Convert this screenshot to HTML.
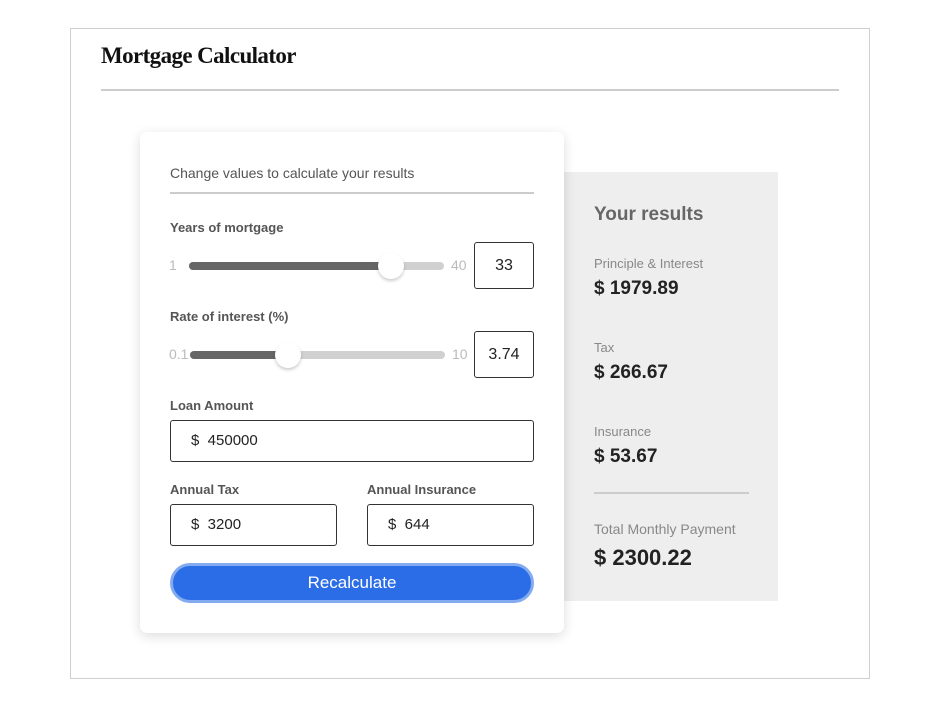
<!DOCTYPE html>
<html><head><meta charset="utf-8"><style>
*{margin:0;padding:0;box-sizing:border-box}
body{width:947px;height:715px;background:#fff;position:relative;overflow:hidden;font-family:"Liberation Sans",sans-serif}
.a{position:absolute;white-space:nowrap}
.outer{position:absolute;left:70px;top:28px;width:800px;height:651px;border:1px solid #cfcfcf}
.title{left:101px;top:43px;font-family:"Liberation Serif",serif;font-weight:bold;font-size:23px;letter-spacing:-0.6px;color:#111}
.rule{position:absolute;height:2px;background:#ccc}
.panel{position:absolute;left:564px;top:172px;width:214px;height:429px;background:#eee}
.card{position:absolute;left:140px;top:132px;width:424px;height:501px;background:#fff;border-radius:7px;box-shadow:0 3px 12px rgba(0,0,0,.14)}
.lbl{font-size:13px;font-weight:bold;color:#555}
.track{position:absolute;height:8px;border-radius:4px;background:#d0d0d0}
.fill{position:absolute;height:8px;border-radius:4px;background:#666}
.thumb{position:absolute;width:26px;height:26px;border-radius:50%;background:#fff;box-shadow:0 2px 3px rgba(0,0,0,.2)}
.num{font-size:14px;color:#bbb}
.box{position:absolute;border:1px solid #333;border-radius:3px;background:#fff;font-size:15px;color:#222}
.sm{font-size:13px;color:#888}
.big{font-size:19px;font-weight:bold;color:#222}
</style></head><body>
<div class="outer"></div>
<div class="a title">Mortgage Calculator</div>
<div class="rule" style="left:101px;top:89px;width:738px"></div>
<div class="panel"></div>
<div class="card"></div>
<div class="a" style="left:170px;top:165px;font-size:14px;color:#555">Change values to calculate your results</div>
<div class="rule" style="left:170px;top:192px;width:364px"></div>

<div class="a lbl" style="left:170px;top:220px">Years of mortgage</div>
<div class="a num" style="left:169px;top:257px">1</div>
<div class="track" style="left:189px;top:262px;width:255px"></div>
<div class="fill" style="left:189px;top:262px;width:200px"></div>
<div class="thumb" style="left:378px;top:253px"></div>
<div class="a num" style="left:451px;top:257px">40</div>
<div class="box" style="left:474px;top:242px;width:60px;height:47px;text-align:center;line-height:45px;font-size:16px">33</div>

<div class="a lbl" style="left:170px;top:309px">Rate of interest (%)</div>
<div class="a num" style="left:169px;top:346px">0.1</div>
<div class="track" style="left:190px;top:351px;width:255px"></div>
<div class="fill" style="left:190px;top:351px;width:100px"></div>
<div class="thumb" style="left:275px;top:342px"></div>
<div class="a num" style="left:452px;top:346px">10</div>
<div class="box" style="left:474px;top:331px;width:60px;height:47px;text-align:center;line-height:45px;font-size:16px">3.74</div>

<div class="a lbl" style="left:170px;top:398px">Loan Amount</div>
<div class="box" style="left:170px;top:420px;width:364px;height:42px;line-height:40px;padding-left:20px">$&nbsp; 450000</div>
<div class="a lbl" style="left:170px;top:482px">Annual Tax</div>
<div class="box" style="left:170px;top:504px;width:167px;height:42px;line-height:40px;padding-left:20px">$&nbsp; 3200</div>
<div class="a lbl" style="left:367px;top:482px">Annual Insurance</div>
<div class="box" style="left:367px;top:504px;width:167px;height:42px;line-height:40px;padding-left:20px">$&nbsp; 644</div>
<div class="a" style="left:170px;top:563px;width:364px;height:40px;border-radius:20px;background:#2b6de6;border:3px solid #84aaf0;color:#fff;font-size:17px;text-align:center;line-height:34px">Recalculate</div>

<div class="a" style="left:594px;top:204px;font-size:19px;font-weight:bold;color:#666">Your results</div>
<div class="a sm" style="left:594px;top:256px">Principle &amp; Interest</div>
<div class="a big" style="left:594px;top:278px">$ 1979.89</div>
<div class="a sm" style="left:594px;top:340px">Tax</div>
<div class="a big" style="left:594px;top:362px">$ 266.67</div>
<div class="a sm" style="left:594px;top:424px">Insurance</div>
<div class="a big" style="left:594px;top:446px">$ 53.67</div>
<div class="rule" style="left:594px;top:492px;width:155px"></div>
<div class="a" style="left:594px;top:521px;font-size:14px;color:#888">Total Monthly Payment</div>
<div class="a" style="left:594px;top:545px;font-size:22px;font-weight:bold;color:#222">$ 2300.22</div>
</body></html>
